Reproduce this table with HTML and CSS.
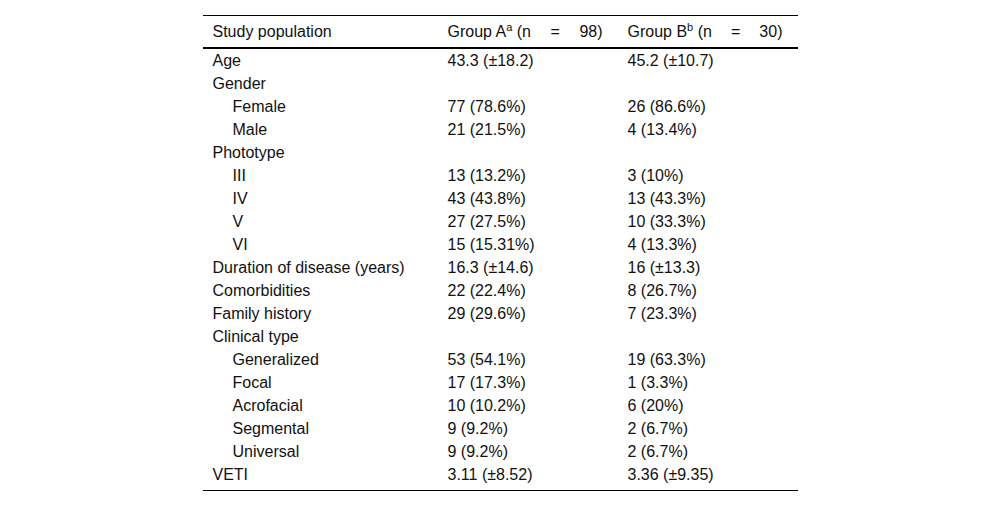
FILE: index.html
```html
<!DOCTYPE html>
<html>
<head>
<meta charset="utf-8">
<link rel="stylesheet" href="styles.css">
</head>
<body>
<div class="wrap">
<table class="tbl">
  <thead>
    <tr>
      <th class="c1">Study population</th>
      <th class="c2"><span class="hd"><span>Group A<sup>a</sup> (n</span><span>=</span><span>98)</span></span></th>
      <th class="c3"><span class="hd"><span>Group B<sup>b</sup> (n</span><span>=</span><span>30)</span></span></th>
    </tr>
  </thead>
  <tbody>
    <tr><td>Age</td><td>43.3 (±18.2)</td><td>45.2 (±10.7)</td></tr>
    <tr><td>Gender</td><td></td><td></td></tr>
    <tr><td class="ind">Female</td><td>77 (78.6%)</td><td>26 (86.6%)</td></tr>
    <tr><td class="ind">Male</td><td>21 (21.5%)</td><td>4 (13.4%)</td></tr>
    <tr><td>Phototype</td><td></td><td></td></tr>
    <tr><td class="ind">III</td><td>13 (13.2%)</td><td>3 (10%)</td></tr>
    <tr><td class="ind">IV</td><td>43 (43.8%)</td><td>13 (43.3%)</td></tr>
    <tr><td class="ind">V</td><td>27 (27.5%)</td><td>10 (33.3%)</td></tr>
    <tr><td class="ind">VI</td><td>15 (15.31%)</td><td>4 (13.3%)</td></tr>
    <tr><td>Duration of disease (years)</td><td>16.3 (±14.6)</td><td>16 (±13.3)</td></tr>
    <tr><td>Comorbidities</td><td>22 (22.4%)</td><td>8 (26.7%)</td></tr>
    <tr><td>Family history</td><td>29 (29.6%)</td><td>7 (23.3%)</td></tr>
    <tr><td>Clinical type</td><td></td><td></td></tr>
    <tr><td class="ind">Generalized</td><td>53 (54.1%)</td><td>19 (63.3%)</td></tr>
    <tr><td class="ind">Focal</td><td>17 (17.3%)</td><td>1 (3.3%)</td></tr>
    <tr><td class="ind">Acrofacial</td><td>10 (10.2%)</td><td>6 (20%)</td></tr>
    <tr><td class="ind">Segmental</td><td>9 (9.2%)</td><td>2 (6.7%)</td></tr>
    <tr><td class="ind">Universal</td><td>9 (9.2%)</td><td>2 (6.7%)</td></tr>
    <tr class="last"><td>VETI</td><td>3.11 (±8.52)</td><td>3.36 (±9.35)</td></tr>
  </tbody>
</table>
</div>
</body>
</html>
```

FILE: styles.css
```css
html, body {
  margin: 0;
  padding: 0;
  background: #fff;
}
body {
  font-family: "Liberation Sans", Arial, sans-serif;
  font-size: 16px;
  color: #111;
}
.wrap {
  padding-top: 15px;
}
.tbl {
  width: 595px;
  margin: 0 auto;
  border-collapse: collapse;
  table-layout: fixed;
}
.tbl th {
  font-weight: normal;
  text-align: left;
  height: 31px;
  padding: 0 15px 0 10px;
  vertical-align: middle;
  border-top: 1px solid #000;
  border-bottom: 2px solid #000;
}
.tbl th.c1 { width: 210px; }
.tbl th.c2, .tbl th.c3 { width: 155px; }
.hd {
  display: flex;
  justify-content: space-between;
  white-space: nowrap;
}
.hd sup {
  font-size: 11px;
  line-height: 0;
  vertical-align: 6px;
}
.tbl td {
  height: 23px;
  padding: 0 10px;
  vertical-align: middle;
  white-space: nowrap;
}
.tbl td.ind {
  padding-left: 30px;
}
.tbl tr.last td {
  height: 23px;
  padding-bottom: 4px;
  border-bottom: 1px solid #000;
}
```
